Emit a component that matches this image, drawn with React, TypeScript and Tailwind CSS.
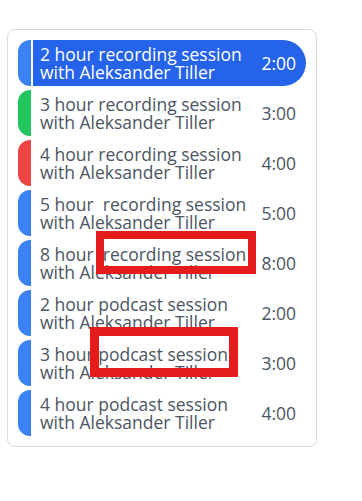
import React from 'react';

interface Session {
  title: string;
  time: string;
  color: string;
}

const SESSIONS: Session[] = [
  { title: '2 hour recording session', time: '2:00', color: 'bg-[#3b82f6]' },
  { title: '3 hour recording session', time: '3:00', color: 'bg-[#22c55e]' },
  { title: '4 hour recording session', time: '4:00', color: 'bg-[#ef4444]' },
  { title: '5 hour  recording session', time: '5:00', color: 'bg-[#3b82f6]' },
  { title: '8 hour  recording session', time: '8:00', color: 'bg-[#3b82f6]' },
  { title: '2 hour podcast session', time: '2:00', color: 'bg-[#3b82f6]' },
  { title: '3 hour podcast session', time: '3:00', color: 'bg-[#3b82f6]' },
  { title: '4 hour podcast session', time: '4:00', color: 'bg-[#3b82f6]' },
];

export default function App() {
  const selected = 0;

  return (
    <div
      className="relative w-[362px] h-[501px] bg-white"
      style={{ fontFamily: '"Open Sans", "Noto Sans", sans-serif' }}
    >
      <div className="absolute left-[7px] top-[29px] w-[310px] border border-[#d5dbe3] rounded-lg p-[10px] flex flex-col gap-[4px]">
        {SESSIONS.map((s, i) => {
          const isSelected = i === selected;
          return (
            <div key={i} className="flex h-[46px]">
              {/* Colour tab */}
              <div className={`w-[13px] rounded-l-[12px] ${s.color}`} />
              <div
                className={`ml-[2px] flex-1 flex items-center pl-[7px] pr-[10px] text-[17.5px] leading-[18px] ${
                  isSelected
                    ? 'bg-[#2563eb] text-white rounded-r-full'
                    : 'text-[#4b5563]'
                }`}
              >
                <div className="flex-1 flex flex-col">
                  <span className="whitespace-pre">{s.title}</span>
                  <span>with Aleksander Tiller</span>
                </div>
                <span>{s.time}</span>
              </div>
            </div>
          );
        })}
      </div>

      {/* Annotation boxes */}
      <div className="absolute left-[96px] top-[231px] w-[160px] h-[43px] border-[8px] border-[#e51c1c]" />
      <div className="absolute left-[90px] top-[327px] w-[148px] h-[50px] border-[9px] border-[#e51c1c]" />
    </div>
  );
}
